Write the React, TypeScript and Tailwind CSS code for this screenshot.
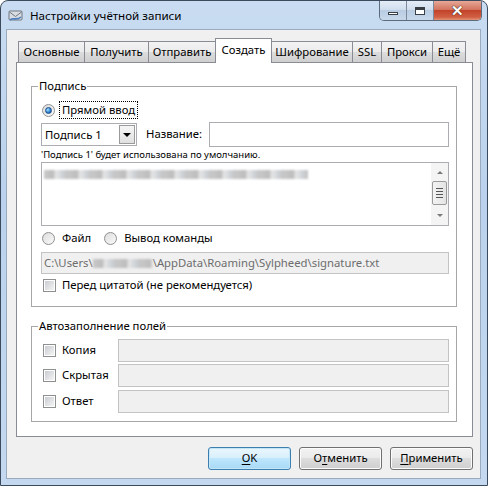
import React from 'react';

const tabs = [
  { label: 'Основные', w: 67 },
  { label: 'Получить', w: 65 },
  { label: 'Отправить', w: 68 },
  { label: 'Создать', w: 57, active: true },
  { label: 'Шифрование', w: 82 },
  { label: 'SSL', w: 30 },
  { label: 'Прокси', w: 52 },
  { label: 'Ещё', w: 34 },
];

const Radio: React.FC<{ checked?: boolean }> = ({ checked }) => (
  <span className="flex h-[13px] w-[13px] shrink-0 items-center justify-center rounded-full border border-[#8e8f8f] bg-gradient-to-br from-[#dcdcdc] to-[#fbfbfb]">
    {checked && (
      <span className="h-[7px] w-[7px] rounded-full border border-[#1c4f8a] bg-[radial-gradient(circle_at_35%_35%,#aee3ff,#2a84d2_55%,#174a8a)]" />
    )}
  </span>
);

const Check: React.FC = () => (
  <span className="flex h-[13px] w-[13px] shrink-0 items-center justify-center border border-[#8e8f8f] bg-white">
    <span className="h-[9px] w-[9px] bg-gradient-to-br from-[#c9ccd1] to-[#f4f4f4]" />
  </span>
);

const Btn: React.FC<{ pre?: string; u: string; post: string; primary?: boolean }> = ({ pre, u, post, primary }) => (
  <button
    className={
      'flex h-[23px] w-[83px] items-center justify-center rounded-[3px] border text-black ' +
      (primary
        ? 'border-[#3c7fb1] bg-[linear-gradient(#eaf6fd_0%,#d9f0fc_45%,#bee6fd_50%,#a7d9f5_100%)] shadow-[inset_0_0_0_1px_#c4e5f6]'
        : 'border-[#707070] bg-[linear-gradient(#f2f2f2_0%,#ebebeb_45%,#dddddd_50%,#cfcfcf_100%)] shadow-[inset_0_0_0_1px_#fcfcfc]')
    }
  >
    {pre}
    <span className="underline underline-offset-2">{u}</span>
    {post}
  </button>
);

const Blur: React.FC<{ w: number }> = ({ w }) => (
  <span
    className="inline-block h-[9px] bg-[repeating-linear-gradient(90deg,#c8c8c8_0px,#bdbdbd_9px,#e6e6e6_12px,#cfd3d8_18px,#c2c2c2_24px)] blur-[1px]"
    style={{ width: w }}
  />
);

export default function App() {
  return (
    <div className="flex h-[486px] w-[488px] flex-col overflow-hidden rounded-t-[8px] border border-[#3b4a5c] bg-[linear-gradient(#c9dcf1,#bad2ed_40%,#c4d9f0)] font-['Noto_Sans',sans-serif] text-[11.3px] text-black">
      {/* title bar */}
      <div className="flex h-[29px] shrink-0 items-start">
        <svg className="ml-[7px] mt-[7px] h-[15px] w-[15px]" viewBox="0 0 15 15">
          <rect x="1" y="3" width="13" height="9" rx="1" fill="#d9dde3" stroke="#6f7680" />
          <path d="M1.5 4 L7.5 8.5 L13.5 4" fill="none" stroke="#6f7680" />
          <path d="M2 12 C5 9 9 13 13 9" fill="none" stroke="#4d7fc0" strokeWidth="1.6" />
        </svg>
        <span className="ml-[7px] mt-[6px] text-[11.6px] leading-[17px] text-black">Настройки учётной записи</span>
        <div className="ml-auto mr-[5px] flex h-[20px] overflow-hidden rounded-b-[5px] border border-t-0 border-[#5c6b7e]">
          <div className="flex w-[27px] items-center justify-center border-r border-[#7d8a9b] bg-[linear-gradient(#e4edf7,#d0deee_45%,#b9cce2_50%,#c8d8ea)]">
            <span className="mt-[5px] h-[3px] w-[10px] border border-[#3a3f46] bg-white" />
          </div>
          <div className="flex w-[27px] items-center justify-center border-r border-[#7d8a9b] bg-[linear-gradient(#e4edf7,#d0deee_45%,#b9cce2_50%,#c8d8ea)]">
            <span className="h-[8px] w-[10px] border border-[#3a3f46] bg-white shadow-[inset_0_2px_0_#3a3f46]" />
          </div>
          <div className="flex w-[47px] items-center justify-center bg-[linear-gradient(#e7a898,#d2745f_45%,#c3432a_50%,#d15f43_85%,#e39477)]">
            <span className="text-[15px] font-bold leading-none text-white [text-shadow:0_0_1px_#3a1a10,0_0_1px_#3a1a10]">✕</span>
          </div>
        </div>
      </div>

      {/* client */}
      <div className="mb-[7px] ml-[6px] mr-[7px] flex flex-1 flex-col bg-[#f0f0f0] shadow-[0_0_0_1px_#9aaabf]">
        <div className="ml-[9px] mt-[8px] flex h-[24px] items-end">
          {tabs.map((t, i) => (
            <div
              key={t.label}
              className={
                'flex items-center justify-center border border-b-0 border-[#898c95] leading-none ' +
                (i > 0 ? '-ml-px ' : 'ml-[2px] ') +
                (t.active
                  ? 'relative z-10 -mb-px h-[25px] bg-white pb-[2px]'
                  : 'h-[21px] bg-[linear-gradient(#f3f3f3,#ebebeb_50%,#dddddd_51%,#cfcfcf)]')
              }
              style={{ width: t.w }}
            >
              {t.label}
            </div>
          ))}
        </div>

        <div className="ml-[9px] h-[375px] w-[457px] border border-[#898c95] bg-white">
          {/* Подпись */}
          <div className="relative ml-[14px] mt-[23px] flex h-[221px] w-[426px] flex-col border border-[#a7a7a7] pl-[9px] pr-[7px]">
            <span className="absolute -top-[9px] left-[6px] bg-white px-px leading-[16px]">Подпись</span>

            <div className="mt-[14px] flex h-[18px] items-center">
              <span className="ml-px"><Radio checked /></span>
              <span className="ml-[4px] border border-dotted border-black px-[2px] leading-[16px]">Прямой ввод</span>
            </div>

            <div className="mt-[3px] flex h-[25px] items-center">
              <div className="flex h-[23px] w-[96px] items-center border border-[#abadb3] bg-white pl-[3px]">
                <span className="flex-1 leading-none">Подпись 1</span>
                <span className="mr-px flex h-[19px] w-[16px] items-center justify-center border border-[#9a9a9a] bg-[linear-gradient(#f6f6f6,#e0e0e0)]">
                  <span className="h-0 w-0 border-x-[4px] border-t-[4px] border-x-transparent border-t-black" />
                </span>
              </div>
              <span className="ml-[9px] w-[63px]">Название:</span>
              <div className="h-[25px] flex-1 border border-[#abadb3] bg-white" />
            </div>

            <div className="flex h-[15px] items-center text-[9.5px] leading-none">
              'Подпись 1' будет использована по умолчанию.
            </div>

            <div className="flex h-[64px] border border-[#abadb3] bg-white">
              <div className="flex-1 pl-[2px] pt-[4px]">
                <Blur w={264} />
              </div>
              <div className="flex w-[17px] flex-col items-center bg-[#f4f4f4] pt-[8px]">
                <span className="h-0 w-0 border-x-[3px] border-b-[3px] border-x-transparent border-b-[#7a7a7a]" />
                <div className="mt-[7px] flex h-[24px] w-[15px] flex-col items-center justify-center gap-[2px] rounded-[2px] border border-[#9a9a9a] bg-[linear-gradient(90deg,#f3f3f3,#e4e4e4)]">
                  <span className="h-px w-[7px] bg-[#555]" />
                  <span className="h-px w-[7px] bg-[#555]" />
                  <span className="h-px w-[7px] bg-[#555]" />
                  <span className="h-px w-[7px] bg-[#555]" />
                </div>
                <span className="mt-[9px] h-0 w-0 border-x-[3px] border-t-[3px] border-x-transparent border-t-[#7a7a7a]" />
              </div>
            </div>

            <div className="mt-[3px] flex h-[18px] items-center">
              <span className="ml-px"><Radio /></span>
              <span className="ml-[7px]">Файл</span>
              <span className="ml-[13px]"><Radio /></span>
              <span className="ml-[7px]">Вывод команды</span>
            </div>

            <div className="mt-[5px] flex h-[22px] items-center border border-[#c3c3c3] bg-[#f0f0f0] pl-[2px] text-[#6d6d6d]">
              C:\Users\
              <Blur w={60} />
              \AppData\Roaming\Sylpheed\signature.txt
            </div>

            <div className="mt-[3px] flex h-[17px] items-center">
              <span className="ml-[2px]"><Check /></span>
              <span className="ml-[6px]">Перед цитатой (не рекомендуется)</span>
            </div>
          </div>

          {/* Автозаполнение */}
          <div className="relative ml-[14px] mt-[19px] flex h-[96px] w-[426px] flex-col border border-[#a7a7a7] pl-[11px] pr-[7px]">
            <span className="absolute -top-[9px] left-[6px] bg-white px-px leading-[16px]">Автозаполнение полей</span>
            {[
              { l: 'Копия', mt: 'mt-[12px]' },
              { l: 'Скрытая', mt: 'mt-[2px]' },
              { l: 'Ответ', mt: 'mt-[3px]' },
            ].map((r) => (
              <div key={r.l} className={'flex h-[23px] items-center ' + r.mt}>
                <Check />
                <span className="ml-[6px] w-[56px]">{r.l}</span>
                <div className="h-[23px] flex-1 border border-[#c3c3c3] bg-[#f0f0f0]" />
              </div>
            ))}
          </div>
        </div>

        <div className="ml-[9px] mt-[10px] flex w-[457px] justify-end gap-[8px]">
          <Btn u="О" post="K" primary />
          <Btn pre="О" u="т" post="менить" />
          <Btn u="П" post="рименить" />
        </div>
      </div>
    </div>
  );
}
